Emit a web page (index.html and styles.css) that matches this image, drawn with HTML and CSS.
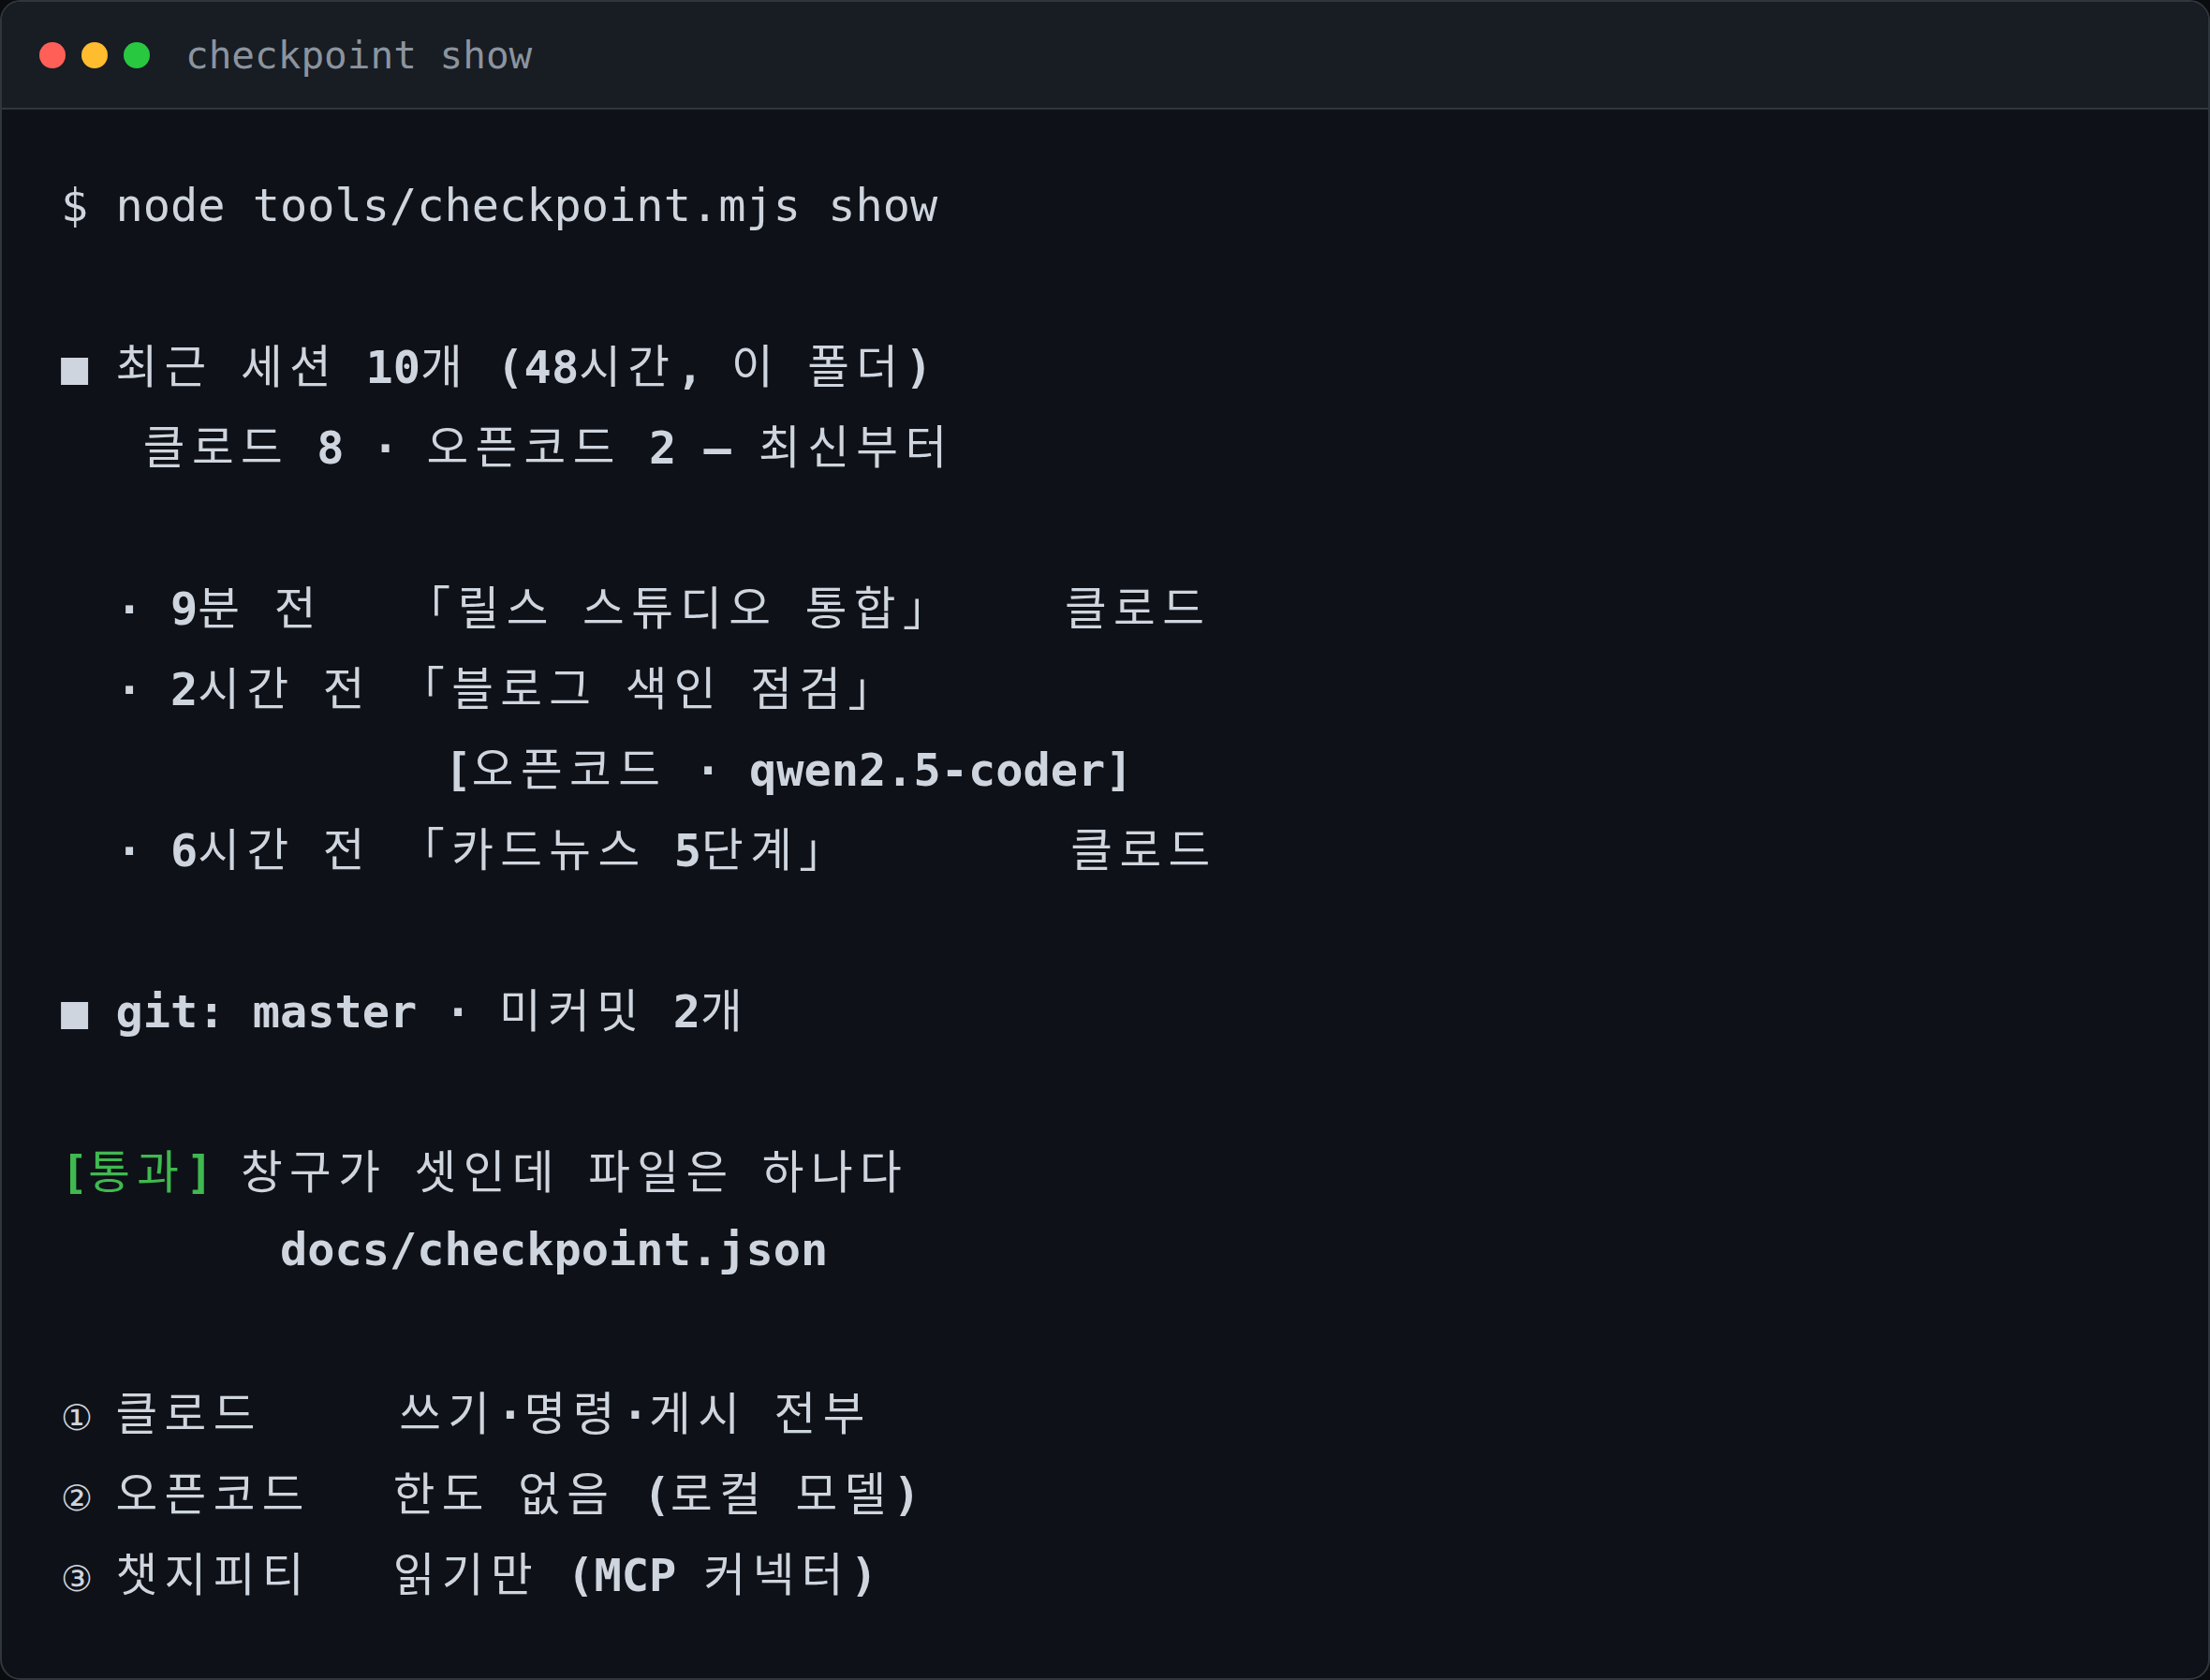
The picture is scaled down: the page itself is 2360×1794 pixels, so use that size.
FILE: index.html
```html
<!DOCTYPE html>
<html lang="ko">
<head>
<meta charset="utf-8">
<title>checkpoint show</title>
<link rel="stylesheet" href="styles.css">
</head>
<body>
<div class="win">
  <div class="bar">
    <div class="dots">
      <span class="dot red"></span>
      <span class="dot yellow"></span>
      <span class="dot green"></span>
    </div>
    <div class="title">checkpoint show</div>
  </div>
  <div class="term">
    <div class="ln cmd">$ node tools/checkpoint.mjs show</div>
    <div class="ln"></div>
    <div class="ln">■ <span class="k">최근</span> <span class="k">세션</span> 10<span class="k">개</span> (48<span class="k">시간</span>, <span class="k">이</span> <span class="k">폴더</span>)</div>
    <div class="ln">   <span class="k">클로드</span> 8 · <span class="k">오픈코드</span> 2 — <span class="k">최신부터</span></div>
    <div class="ln"></div>
    <div class="ln">  · 9<span class="k">분</span> <span class="k">전</span>   <span class="k">「릴스</span> <span class="k">스튜디오</span> <span class="k">통합」</span>    <span class="k">클로드</span></div>
    <div class="ln">  · 2<span class="k">시간</span> <span class="k">전</span> <span class="k">「블로그</span> <span class="k">색인</span> <span class="k">점검」</span></div>
    <div class="ln">              [<span class="k">오픈코드</span> · qwen2.5-coder]</div>
    <div class="ln">  · 6<span class="k">시간</span> <span class="k">전</span> <span class="k">「카드뉴스</span> 5<span class="k">단계」</span>        <span class="k">클로드</span></div>
    <div class="ln"></div>
    <div class="ln">■ git: master · <span class="k">미커밋</span> 2<span class="k">개</span></div>
    <div class="ln"></div>
    <div class="ln"><span class="ok">[<span class="k">통과</span>]</span> <span class="k">창구가</span> <span class="k">셋인데</span> <span class="k">파일은</span> <span class="k">하나다</span></div>
    <div class="ln">        docs/checkpoint.json</div>
    <div class="ln"></div>
    <div class="ln"><span class="num">①</span> <span class="k">클로드</span>     <span class="k">쓰기</span>·<span class="k">명령</span>·<span class="k">게시</span> <span class="k">전부</span></div>
    <div class="ln"><span class="num">②</span> <span class="k">오픈코드</span>   <span class="k">한도</span> <span class="k">없음</span> (<span class="k">로컬</span> <span class="k">모델</span>)</div>
    <div class="ln"><span class="num">③</span> <span class="k">챗지피티</span>   <span class="k">읽기만</span> (MCP <span class="k">커넥터</span>)</div>
  </div>
</div>
</body>
</html>
```

FILE: styles.css
```css
html, body {
  margin: 0;
  padding: 0;
  background: #0a0c10;
}

.win {
  box-sizing: border-box;
  width: 2360px;
  height: 1794px;
  border: 2px solid #30363d;
  border-radius: 22px;
  background: #0e1117;
  overflow: hidden;
  display: flex;
  flex-direction: column;
}

.bar {
  flex: none;
  height: 113px;
  background: #181c23;
  border-bottom: 2px solid #30363d;
  display: flex;
  align-items: center;
  padding-left: 40px;
}

.dots {
  display: flex;
  gap: 17px;
}

.dot {
  width: 28px;
  height: 28px;
  border-radius: 50%;
}

.red { background: #ff5f57; }
.yellow { background: #febc2e; }
.green { background: #28c840; }

.title {
  margin-left: 38px;
  font-family: "DejaVu Sans Mono", monospace;
  font-size: 41px;
  color: #8b949e;
  white-space: pre;
}

.term {
  padding: 56px 0 0 63px;
  font-family: "DejaVu Sans Mono", "Noto Sans CJK KR", monospace;
  font-size: 48.6px;
  font-weight: 700;
  color: #cfd5de;
}

.ln {
  box-sizing: border-box;
  height: 86px;
  line-height: 86px;
  white-space: pre;
}

.cmd {
  font-weight: 400;
  padding-top: 3px;
}

.k {
  font-family: "Noto Sans CJK KR", sans-serif;
  font-weight: 400;
  letter-spacing: 7.4px;
}

.ok {
  color: #3fb950;
}

.num {
  display: inline-block;
  width: 29.25px;
  text-align: center;
  font-family: "DejaVu Sans", "Noto Sans CJK KR", sans-serif;
  font-weight: 400;
  font-size: 38px;
}
```
